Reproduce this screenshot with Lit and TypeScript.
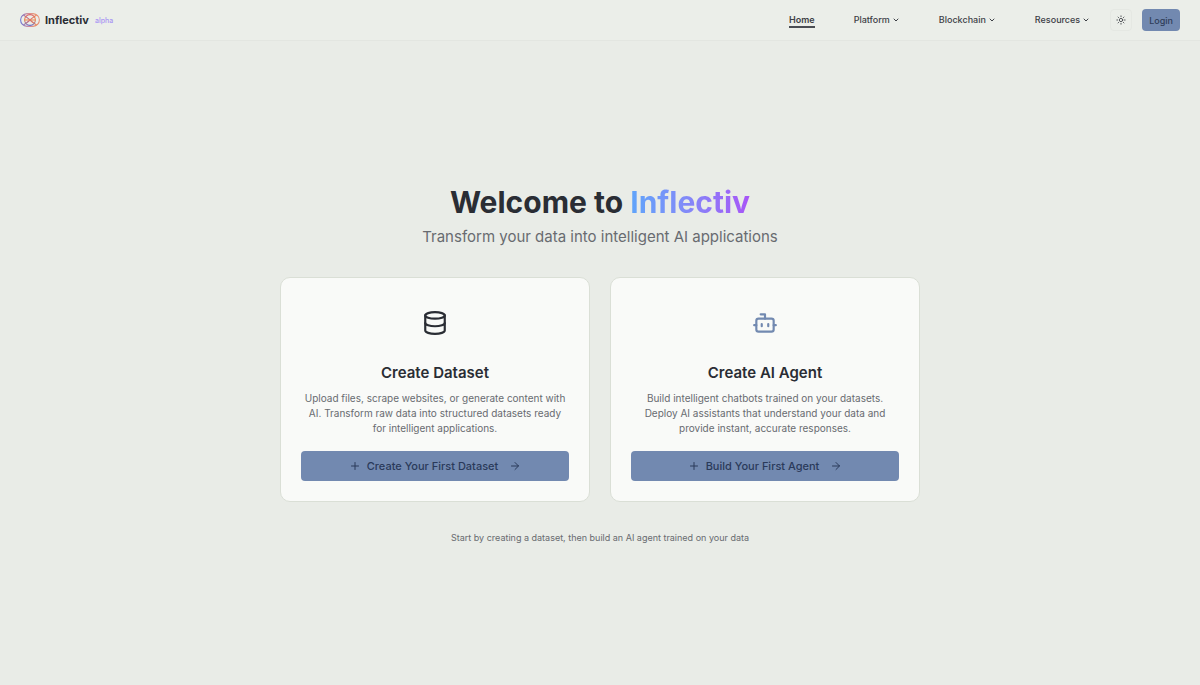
import { LitElement, html, css, svg } from "lit";
import { customElement, property } from "lit/decorators.js";

const icons: Record<string, unknown> = {
  database: svg`<ellipse cx="12" cy="5" rx="9" ry="3"/><path d="M3 5V19A9 3 0 0 0 21 19V5"/><path d="M3 12A9 3 0 0 0 21 12"/>`,
  bot: svg`<path d="M12 8V4H8"/><rect width="16" height="12" x="4" y="8" rx="2"/><path d="M2 14h2M20 14h2M15 13v2M9 13v2"/>`,
  plus: svg`<path d="M5 12h14M12 5v14"/>`,
  arrow: svg`<path d="M5 12h14M12 5l7 7-7 7"/>`,
  chevron: svg`<path d="m6 9 6 6 6-6"/>`,
  sun: svg`<circle cx="12" cy="12" r="4"/><path d="M12 2v2M12 20v2M4.93 4.93l1.41 1.41M17.66 17.66l1.41 1.41M2 12h2M20 12h2M6.34 17.66l-1.41 1.41M19.07 4.93l-1.41 1.41"/>`,
};

const icon = (name: string, cls: string) => html`<svg class="icon ${cls}" viewBox="0 0 24 24" aria-hidden="true">${icons[name]}</svg>`;

const shared = css`
  * { box-sizing: border-box; }
  button { font: inherit; color: inherit; border: 0; margin: 0; cursor: pointer; }
  .icon {
    display: block;
    flex: none;
    fill: none;
    stroke: currentColor;
    stroke-width: 2;
    stroke-linecap: round;
    stroke-linejoin: round;
  }
`;

@customElement("site-header")
class SiteHeader extends LitElement {
  static styles = [shared, css`
    :host { display: block; }
    header {
      display: flex;
      align-items: center;
      justify-content: space-between;
      height: 41px;
      padding: 0 20px;
      border-bottom: 1px solid #e3e6e1;
      background: #ebeee9;
    }
    .brand { display: flex; align-items: center; gap: 5px; color: #2a2d34; text-decoration: none; }
    .logo { display: block; width: 20px; height: 14px; }
    .name { font-size: 11px; font-weight: 700; line-height: 16px; }
    .tag { font-size: 7px; font-weight: 500; line-height: 12px; padding: 2px 0 0 1px; color: #a996f3; }
    .right { display: flex; align-items: center; }
    nav { display: flex; align-items: center; gap: 39px; margin-right: 20px; }
    .link {
      display: flex;
      align-items: center;
      gap: 2px;
      padding: 0;
      background: none;
      color: #3d4046;
      font-size: 9px;
      font-weight: 500;
      line-height: 12px;
      text-decoration: none;
    }
    .active { font-weight: 600; border-bottom: 2px solid #4a4d53; border-top: 2px solid transparent; }
    .chevron { width: 8px; height: 8px; stroke-width: 3; }
    .theme {
      display: grid;
      place-items: center;
      width: 22px;
      height: 22px;
      padding: 0;
      margin-right: 10px;
      border: 1px solid #e5e8e3;
      border-radius: 4px;
      background: none;
      color: #3d4046;
    }
    .sun { width: 10px; height: 10px; }
    .login {
      height: 22px;
      padding: 0 7px;
      border-radius: 4px;
      background: #7289b0;
      color: #2f3d59;
      font-size: 9px;
      font-weight: 500;
    }
  `];

  render() {
    return html`
      <header>
        <a class="brand" href="#">
          <svg class="logo" viewBox="0 0 20 14" aria-hidden="true">
            <defs>
              <linearGradient id="ring" x1="0" x2="20" y1="2" y2="0" gradientUnits="userSpaceOnUse">
                <stop offset="0" stop-color="#6f7bd6"/>
                <stop offset="0.4" stop-color="#c9687f"/>
                <stop offset="0.7" stop-color="#e87f55"/>
                <stop offset="1" stop-color="#e79a86"/>
              </linearGradient>
              <linearGradient id="core" x1="0" x2="0" y1="1" y2="13" gradientUnits="userSpaceOnUse">
                <stop offset="0" stop-color="#d9606a"/>
                <stop offset="0.5" stop-color="#ee8a4a"/>
                <stop offset="1" stop-color="#5f6fd8"/>
              </linearGradient>
            </defs>
            <g fill="none" stroke="url(#ring)" stroke-width="1.1">
              <rect x="0.6" y="0.8" width="18.8" height="12.4" rx="6.2"/>
              <path d="M3.4 2.2C7 3.4 13 10.6 16.6 11.8M3.4 11.8C7 10.6 13 3.4 16.6 2.2"/>
            </g>
            <g fill="none" stroke="url(#core)" stroke-width="1.1">
              <circle cx="10" cy="7" r="5.4"/>
              <path d="M4.6 7.02 15.4 7"/>
            </g>
          </svg>
          <span class="name">Inflectiv</span>
          <span class="tag">alpha</span>
        </a>
        <div class="right">
          <nav aria-label="Main">
            <a class="link active" href="#" aria-current="page">Home</a>
            ${["Platform", "Blockchain", "Resources"].map(
              (label) => html`<button class="link" type="button" aria-haspopup="true">${label}${icon("chevron", "chevron")}</button>`
            )}
          </nav>
          <button class="theme" type="button" aria-label="Toggle theme">${icon("sun", "sun")}</button>
          <button class="login" type="button">Login</button>
        </div>
      </header>
    `;
  }
}

@customElement("action-card")
class ActionCard extends LitElement {
  @property() icon = "";
  @property() heading = "";
  @property() text = "";
  @property() action = "";

  static styles = [shared, css`
    :host { display: block; }
    article {
      display: flex;
      flex-direction: column;
      align-items: center;
      height: 100%;
      padding: 32px 20px 20px;
      border: 1px solid #dadfd6;
      border-radius: 10px;
      background: #f9faf8;
      text-align: center;
    }
    .symbol { width: 26px; height: 26px; margin-bottom: 27px; color: #2a2d34; }
    .bot { color: #7289b0; }
    h2 { margin: 0 0 8px; font-size: 15px; font-weight: 600; line-height: 20px; color: #2a2d34; }
    p { margin: 0 0 15px; font-size: 10px; line-height: 15px; color: #686b70; }
    .action {
      display: flex;
      align-items: center;
      justify-content: center;
      width: 100%;
      height: 30px;
      margin-top: auto;
      border-radius: 4px;
      background: #7289b0;
      color: #2a3a5a;
      font-size: 11px;
      font-weight: 500;
    }
    .small { width: 12px; height: 12px; }
    .label { margin: 0 11px 0 6px; }
  `];

  render() {
    return html`
      <article>
        ${icon(this.icon, `symbol ${this.icon}`)}
        <h2>${this.heading}</h2>
        <p>${this.text}</p>
        <button class="action" type="button">
          ${icon("plus", "small")}<span class="label">${this.action}</span>${icon("arrow", "small")}
        </button>
      </article>
    `;
  }
}

@customElement("app-root")
class AppRoot extends LitElement {
  static styles = [shared, css`
    :host {
      display: flex;
      flex-direction: column;
      min-height: 100vh;
      background: #e9ece7;
      color: #2a2d34;
      font-family: Inter, "Liberation Sans", sans-serif;
    }
    main {
      flex: 1;
      display: flex;
      flex-direction: column;
      align-items: center;
      justify-content: center;
      padding: 20px;
      text-align: center;
    }
    h1 { margin: 0 0 5px; font-size: 30px; font-weight: 700; line-height: 40px; }
    .accent {
      background: linear-gradient(90deg, #60a5fa, #818cf8 45%, #a855f7);
      background-clip: text;
      -webkit-background-clip: text;
      color: transparent;
    }
    .lead { margin: 0 0 30px; font-size: 15px; line-height: 20px; color: #686b70; }
    .cards {
      display: grid;
      grid-template-columns: repeat(auto-fit, minmax(260px, 1fr));
      gap: 20px;
      width: 100%;
      max-width: 640px;
    }
    .note { margin: 29px 0 0; font-size: 9px; line-height: 14px; color: #686b70; }
  `];

  render() {
    return html`
      <site-header></site-header>
      <main>
        <h1>Welcome to <span class="accent">Inflectiv</span></h1>
        <p class="lead">Transform your data into intelligent AI applications</p>
        <div class="cards">
          <action-card
            icon="database"
            heading="Create Dataset"
            text="Upload files, scrape websites, or generate content with AI. Transform raw data into structured datasets ready for intelligent applications."
            action="Create Your First Dataset"
          ></action-card>
          <action-card
            icon="bot"
            heading="Create AI Agent"
            text="Build intelligent chatbots trained on your datasets. Deploy AI assistants that understand your data and provide instant, accurate responses."
            action="Build Your First Agent"
          ></action-card>
        </div>
        <p class="note">Start by creating a dataset, then build an AI agent trained on your data</p>
      </main>
    `;
  }
}
